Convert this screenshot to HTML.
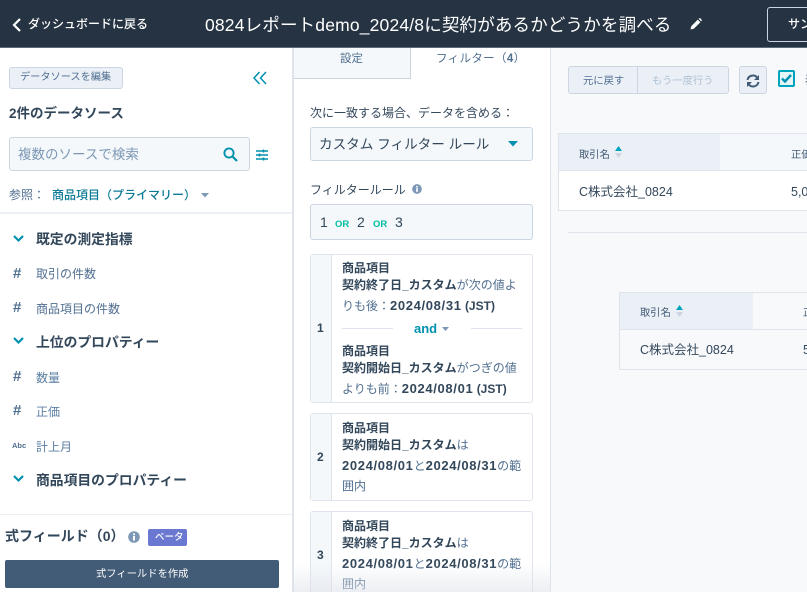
<!DOCTYPE html>
<html><head><meta charset="utf-8">
<style>
html,body{margin:0;padding:0;width:807px;height:592px;overflow:hidden}
#w{position:absolute;left:0;top:0;width:807px;height:592px;overflow:hidden;background:#fff;font-family:"Liberation Sans","Noto Sans CJK JP",sans-serif;color:#33475b}
.t{position:absolute;white-space:nowrap;line-height:20px;height:20px}
.b{position:absolute;box-sizing:border-box}
svg{position:absolute;overflow:visible}
.h{font-size:13.8px;font-weight:700;color:#33475b}
.i{font-size:12px;color:#516f90}
.f{font-size:12px;color:#33475b}
.f b{font-weight:700;color:#33475b}
.f span{color:#516f90}
.f i{font-style:normal;font-weight:700;font-size:13px;letter-spacing:.65px;color:#33475b}
.n{font-size:12px;font-weight:700;color:#33475b}
.hash{font-size:15px;font-weight:700;color:#516f90}
</style></head><body><div id="w">

<!-- panels -->
<div class="b" style="left:293px;top:48px;width:258px;height:544px;background:#fff;border-left:1px solid #dfe3eb;border-right:1px solid #dfe3eb"></div>
<div class="b" style="left:551px;top:48px;width:256px;height:544px;background:#f7f9fb"></div>

<!-- header -->
<div class="b" style="left:0;top:0;width:807px;height:48px;background:#253342;border-bottom:1px solid #5a6b7c"></div>
<svg style="left:12px;top:18px" width="10" height="14"><path d="M8 1 L2 7 L8 13" fill="none" stroke="#fff" stroke-width="2.2"/></svg>
<div class="t" style="left:28px;top:14px;font-size:12px;font-weight:500;color:#fff">ダッシュボードに戻る</div>
<div class="t" style="left:205px;top:15px;font-size:17.5px;color:#fff;letter-spacing:.17px">0824レポートdemo_2024/8に契約があるかどうかを調べる</div>
<svg style="left:690px;top:18px" width="12" height="12" viewBox="0 0 12 12"><path d="M0.5 11.5 L1.2 8.2 L7.8 1.6 L10.4 4.2 L3.8 10.8 Z M8.6 0.8 L9.4 0.2 Q9.9 0 10.4 .4 L11.6 1.6 Q12 2.1 11.7 2.6 L11.1 3.4 Z" fill="#fff"/></svg>
<div class="b" style="left:767px;top:7px;width:60px;height:35px;border:1px solid #cbd6e2;border-radius:3px"></div>
<div class="t" style="left:788px;top:14px;font-size:12px;font-weight:500;color:#fff">サンプル</div>

<!-- left sidebar -->
<div class="b" style="left:292px;top:48px;width:1px;height:544px;background:#dfe3eb"></div>
<div class="b" style="left:9px;top:67px;width:114px;height:22px;background:#eaf0f6;border:1px solid #cbd6e2;border-radius:3px"></div>
<div class="t" style="left:20px;top:68px;font-size:10.2px;color:#506e91">データソースを編集</div>
<svg style="left:253px;top:71px" width="14" height="14" viewBox="0 0 14 14"><path d="M6.5 1 L1 7 L6.5 13 M13 1 L7.5 7 L13 13" fill="none" stroke="#0091ae" stroke-width="1.5"/></svg>
<div class="t h" style="left:9px;top:104px;font-size:13.5px">2件のデータソース</div>
<div class="b" style="left:9px;top:137px;width:241px;height:34px;background:#f5f8fa;border:1px solid #cbd6e2;border-radius:3px"></div>
<div class="t" style="left:18px;top:145px;font-size:13.5px;color:#7c98b6">複数のソースで検索</div>
<svg style="left:223px;top:147px" width="15" height="15" viewBox="0 0 15 15"><circle cx="6" cy="6" r="4.6" fill="none" stroke="#0091ae" stroke-width="1.9"/><path d="M9.5 9.5 L14 14" stroke="#0091ae" stroke-width="2.2"/></svg>
<svg style="left:256px;top:149px" width="12" height="12" viewBox="0 0 12 12"><path d="M0 2h12M0 6h12M0 10h12" stroke="#0091ae" stroke-width="1.4"/><path d="M7.5 .5v3M3.5 4.5v3M7.5 8.5v3" stroke="#0091ae" stroke-width="1.6"/></svg>
<div class="t" style="left:9px;top:185px;font-size:12px;color:#516f90">参照：</div>
<div class="t" style="left:52px;top:185px;font-size:12px;font-weight:500;color:#0b7a94">商品項目（プライマリー）</div>
<svg style="left:201px;top:193px" width="8" height="5"><path d="M0 0H8L4 4.5Z" fill="#7c98b6"/></svg>
<div class="b" style="left:0;top:212px;width:292px;height:2px;background:#eaf0f6"></div>

<svg style="left:13px;top:235px" width="11" height="7"><path d="M1 1 L5.5 5.5 L10 1" fill="none" stroke="#0091ae" stroke-width="2.2"/></svg>
<div class="t h" style="left:36px;top:230px">既定の測定指標</div>
<div class="t hash" style="left:13px;top:264px">#</div>
<div class="t i" style="left:36px;top:264px">取引の件数</div>
<div class="t hash" style="left:13px;top:298px">#</div>
<div class="t i" style="left:36px;top:299px">商品項目の件数</div>
<svg style="left:13px;top:337px" width="11" height="7"><path d="M1 1 L5.5 5.5 L10 1" fill="none" stroke="#0091ae" stroke-width="2.2"/></svg>
<div class="t h" style="left:36px;top:333px">上位のプロパティー</div>
<div class="t hash" style="left:13px;top:367px">#</div>
<div class="t i" style="left:36px;top:368px;color:#5c7fa3">数量</div>
<div class="t hash" style="left:13px;top:401px">#</div>
<div class="t i" style="left:36px;top:402px;color:#5c7fa3">正価</div>
<div class="t" style="left:12px;top:436px;font-size:7.5px;font-weight:700;color:#516f90">Abc</div>
<div class="t i" style="left:36px;top:437px;color:#5c7fa3">計上月</div>
<svg style="left:13px;top:475px" width="11" height="7"><path d="M1 1 L5.5 5.5 L10 1" fill="none" stroke="#0091ae" stroke-width="2.2"/></svg>
<div class="t h" style="left:36px;top:471px">商品項目のプロパティー</div>
<div class="b" style="left:0;top:514px;width:292px;height:1px;background:#eaf0f6"></div>
<div class="t h" style="left:5px;top:526px;font-size:14px">式フィールド（0）</div>
<svg style="left:128px;top:531px" width="12" height="12" viewBox="0 0 12 12"><circle cx="6" cy="6" r="5.8" fill="#7c98b6"/><rect x="5" y="5" width="2" height="4.5" fill="#fff"/><rect x="5" y="2.4" width="2" height="1.8" fill="#fff"/></svg>
<div class="b" style="left:148px;top:529px;width:39px;height:17px;background:#6a78d1;border-radius:2px"></div>
<div class="t" style="left:155px;top:528px;font-size:9.5px;font-weight:500;color:#fff">ベータ</div>
<div class="b" style="left:5px;top:560px;width:274px;height:28px;background:#425b76;border-radius:2px"></div>
<div class="t" style="left:96px;top:565px;font-size:10.3px;color:#fff">式フィールドを作成</div>

<!-- mid panel tabs -->
<div class="b" style="left:294px;top:48px;width:117px;height:31px;background:#f5f8fa;border-right:1px solid #cbd6e2;border-bottom:1px solid #cbd6e2"></div>
<div class="t" style="left:340px;top:49px;font-size:11.5px;color:#516f90">設定</div>
<div class="t" style="left:436px;top:49px;font-size:11.5px;color:#516f90;letter-spacing:.35px">フィルター（<b>4</b>）</div>
<div class="t" style="left:310px;top:103px;font-size:12px;color:#33475b">次に一致する場合、データを含める：</div>
<div class="b" style="left:310px;top:127px;width:223px;height:34px;background:#f5f8fa;border:1px solid #cbd6e2;border-radius:3px"></div>
<div class="t" style="left:319px;top:135px;font-size:13.6px;color:#33475b">カスタム フィルター ルール</div>
<svg style="left:508px;top:141px" width="10" height="6"><path d="M0 0H10L5 5.5Z" fill="#0091ae"/></svg>
<div class="t" style="left:310px;top:180px;font-size:12px;color:#33475b">フィルタールール</div>
<svg style="left:412px;top:184px" width="10" height="10" viewBox="0 0 12 12"><circle cx="6" cy="6" r="5.8" fill="#7c98b6"/><rect x="5" y="5" width="2" height="4.5" fill="#fff"/><rect x="5" y="2.4" width="2" height="1.8" fill="#fff"/></svg>
<div class="b" style="left:310px;top:204px;width:223px;height:36px;background:#f5f8fa;border:1px solid #cbd6e2;border-radius:3px"></div>
<div class="t" style="left:320px;top:212px;font-size:14px;color:#33475b">1</div>
<div class="t" style="left:335px;top:215px;font-size:9.5px;font-weight:700;color:#00bda5">OR</div>
<div class="t" style="left:357px;top:212px;font-size:14px;color:#33475b">2</div>
<div class="t" style="left:373px;top:215px;font-size:9.5px;font-weight:700;color:#00bda5">OR</div>
<div class="t" style="left:395px;top:212px;font-size:14px;color:#33475b">3</div>

<!-- card 1 -->
<div class="b" style="left:310px;top:254px;width:223px;height:149px;background:#fff;border:1px solid #dfe3eb;border-radius:3px"></div>
<div class="b" style="left:311px;top:255px;width:21px;height:147px;background:#f5f8fa;border-right:1px solid #dfe3eb"></div>
<div class="t n" style="left:317px;top:318px">1</div>
<div class="t f" style="left:342px;top:258px"><b>商品項目</b></div>
<div class="t f" style="left:342px;top:275px"><b>契約終了日_カスタム</b><span>が次の値よ</span></div>
<div class="t f" style="left:342px;top:296px"><span>りも後：</span><i>2024/08/31</i> <b>(JST)</b></div>
<div class="b" style="left:342px;top:328px;width:51px;height:1px;background:#dfe3eb"></div>
<div class="b" style="left:471px;top:328px;width:51px;height:1px;background:#dfe3eb"></div>
<div class="t" style="left:414px;top:319px;font-size:13px;font-weight:700;color:#0091ae">and</div>
<svg style="left:442px;top:327px" width="7" height="4"><path d="M0 0H7L3.5 4Z" fill="#7c98b6"/></svg>
<div class="t f" style="left:342px;top:341px"><b>商品項目</b></div>
<div class="t f" style="left:342px;top:358px"><b>契約開始日_カスタム</b><span>がつぎの値</span></div>
<div class="t f" style="left:342px;top:379px"><span>よりも前：</span><i>2024/08/01</i> <b>(JST)</b></div>

<!-- card 2 -->
<div class="b" style="left:310px;top:413px;width:223px;height:88px;background:#fff;border:1px solid #dfe3eb;border-radius:3px"></div>
<div class="b" style="left:311px;top:414px;width:21px;height:86px;background:#f5f8fa;border-right:1px solid #dfe3eb"></div>
<div class="t n" style="left:317px;top:447px">2</div>
<div class="t f" style="left:342px;top:418px"><b>商品項目</b></div>
<div class="t f" style="left:342px;top:435px"><b>契約開始日_カスタム</b><span>は</span></div>
<div class="t f" style="left:342px;top:456px"><i>2024/08/01</i><span>と</span><i>2024/08/31</i><span>の範</span></div>
<div class="t f" style="left:342px;top:476px"><span>囲内</span></div>

<!-- card 3 -->
<div class="b" style="left:310px;top:511px;width:223px;height:90px;background:#fff;border:1px solid #dfe3eb;border-radius:3px"></div>
<div class="b" style="left:311px;top:512px;width:21px;height:88px;background:#f5f8fa;border-right:1px solid #dfe3eb"></div>
<div class="t n" style="left:317px;top:545px">3</div>
<div class="t f" style="left:342px;top:516px"><b>商品項目</b></div>
<div class="t f" style="left:342px;top:533px"><b>契約終了日_カスタム</b><span>は</span></div>
<div class="t f" style="left:342px;top:554px"><i>2024/08/01</i><span>と</span><i>2024/08/31</i><span>の範</span></div>
<div class="t f" style="left:342px;top:574px"><span>囲内</span></div>
<div class="b" style="left:293px;top:564px;width:258px;height:28px;background:linear-gradient(rgba(234,240,246,0),rgba(223,227,235,.6))"></div>

<!-- right panel -->
<div class="b" style="left:568px;top:66px;width:161px;height:28px;background:#eaf0f6;border:1px solid #cbd6e2;border-radius:3px"></div>
<div class="b" style="left:637px;top:67px;width:1px;height:26px;background:#cbd6e2"></div>
<div class="t" style="left:583px;top:72px;font-size:10.3px;color:#506e91">元に戻す</div>
<div class="t" style="left:652px;top:72px;font-size:10.3px;color:#b0c1d4">もう一度行う</div>
<div class="b" style="left:739px;top:66px;width:28px;height:28px;background:#eaf0f6;border:1px solid #cbd6e2;border-radius:3px"></div>
<svg style="left:746px;top:74px" width="14" height="14" viewBox="0 0 14 14"><path d="M1.5 6 A5.5 5.5 0 0 1 11.5 4 M12.5 8 A5.5 5.5 0 0 1 2.5 10" fill="none" stroke="#425b76" stroke-width="2"/><path d="M13 1 V6 H8 Z M1 13 V8 H6 Z" fill="#425b76"/></svg>
<div class="b" style="left:778px;top:70px;width:17px;height:17px;background:#e5f5f8;border:2px solid #00a4bd;border-radius:2px"></div>
<svg style="left:781px;top:74px" width="11" height="9"><path d="M1 4.5 L4 7.5 L10 1" fill="none" stroke="#0091ae" stroke-width="2.4"/></svg>
<div class="t" style="left:805px;top:70px;font-size:12px;color:#33475b">表示</div>

<div class="b" style="left:558px;top:133px;width:249px;height:78px;background:#fff;border:1px solid #dfe3eb;border-right:none"></div>
<div class="b" style="left:559px;top:134px;width:248px;height:37px;background:#f5f8fa;border-bottom:1px solid #dfe3eb"></div>
<div class="b" style="left:559px;top:134px;width:161px;height:36px;background:#eaf0f6"></div>
<div class="t" style="left:579px;top:146px;font-size:10.3px;color:#425b76">取引名</div>
<svg style="left:615px;top:146px" width="7" height="13"><path d="M0 5H7L3.5 0Z" fill="#00a4bd"/><path d="M0 7H7L3.5 12Z" fill="#cbd6e2"/></svg>
<div class="t" style="left:791px;top:146px;font-size:10.3px;color:#425b76">正価</div>
<div class="t" style="left:579px;top:182px;font-size:12.5px;color:#33475b">C株式会社_0824</div>
<div class="t" style="left:791px;top:182px;font-size:12.5px;color:#33475b">5,000</div>

<div class="b" style="left:568px;top:232px;width:239px;height:1px;background:#dfe3eb"></div>

<div class="b" style="left:619px;top:292px;width:188px;height:78px;background:#f7f9fb;border:1px solid #dfe3eb;border-right:none"></div>
<div class="b" style="left:620px;top:329px;width:187px;height:1px;background:#dfe3eb"></div>
<div class="b" style="left:620px;top:293px;width:133px;height:36px;background:#eaf0f6"></div>
<div class="t" style="left:640px;top:304px;font-size:10.3px;color:#425b76">取引名</div>
<svg style="left:676px;top:305px" width="7" height="13"><path d="M0 5H7L3.5 0Z" fill="#00a4bd"/><path d="M0 7H7L3.5 12Z" fill="#cbd6e2"/></svg>
<div class="t" style="left:803px;top:304px;font-size:10.3px;color:#425b76">正価</div>
<div class="t" style="left:640px;top:340px;font-size:12.5px;color:#33475b">C株式会社_0824</div>
<div class="t" style="left:803px;top:340px;font-size:12.5px;color:#33475b">5,000</div>

</div></body></html>
